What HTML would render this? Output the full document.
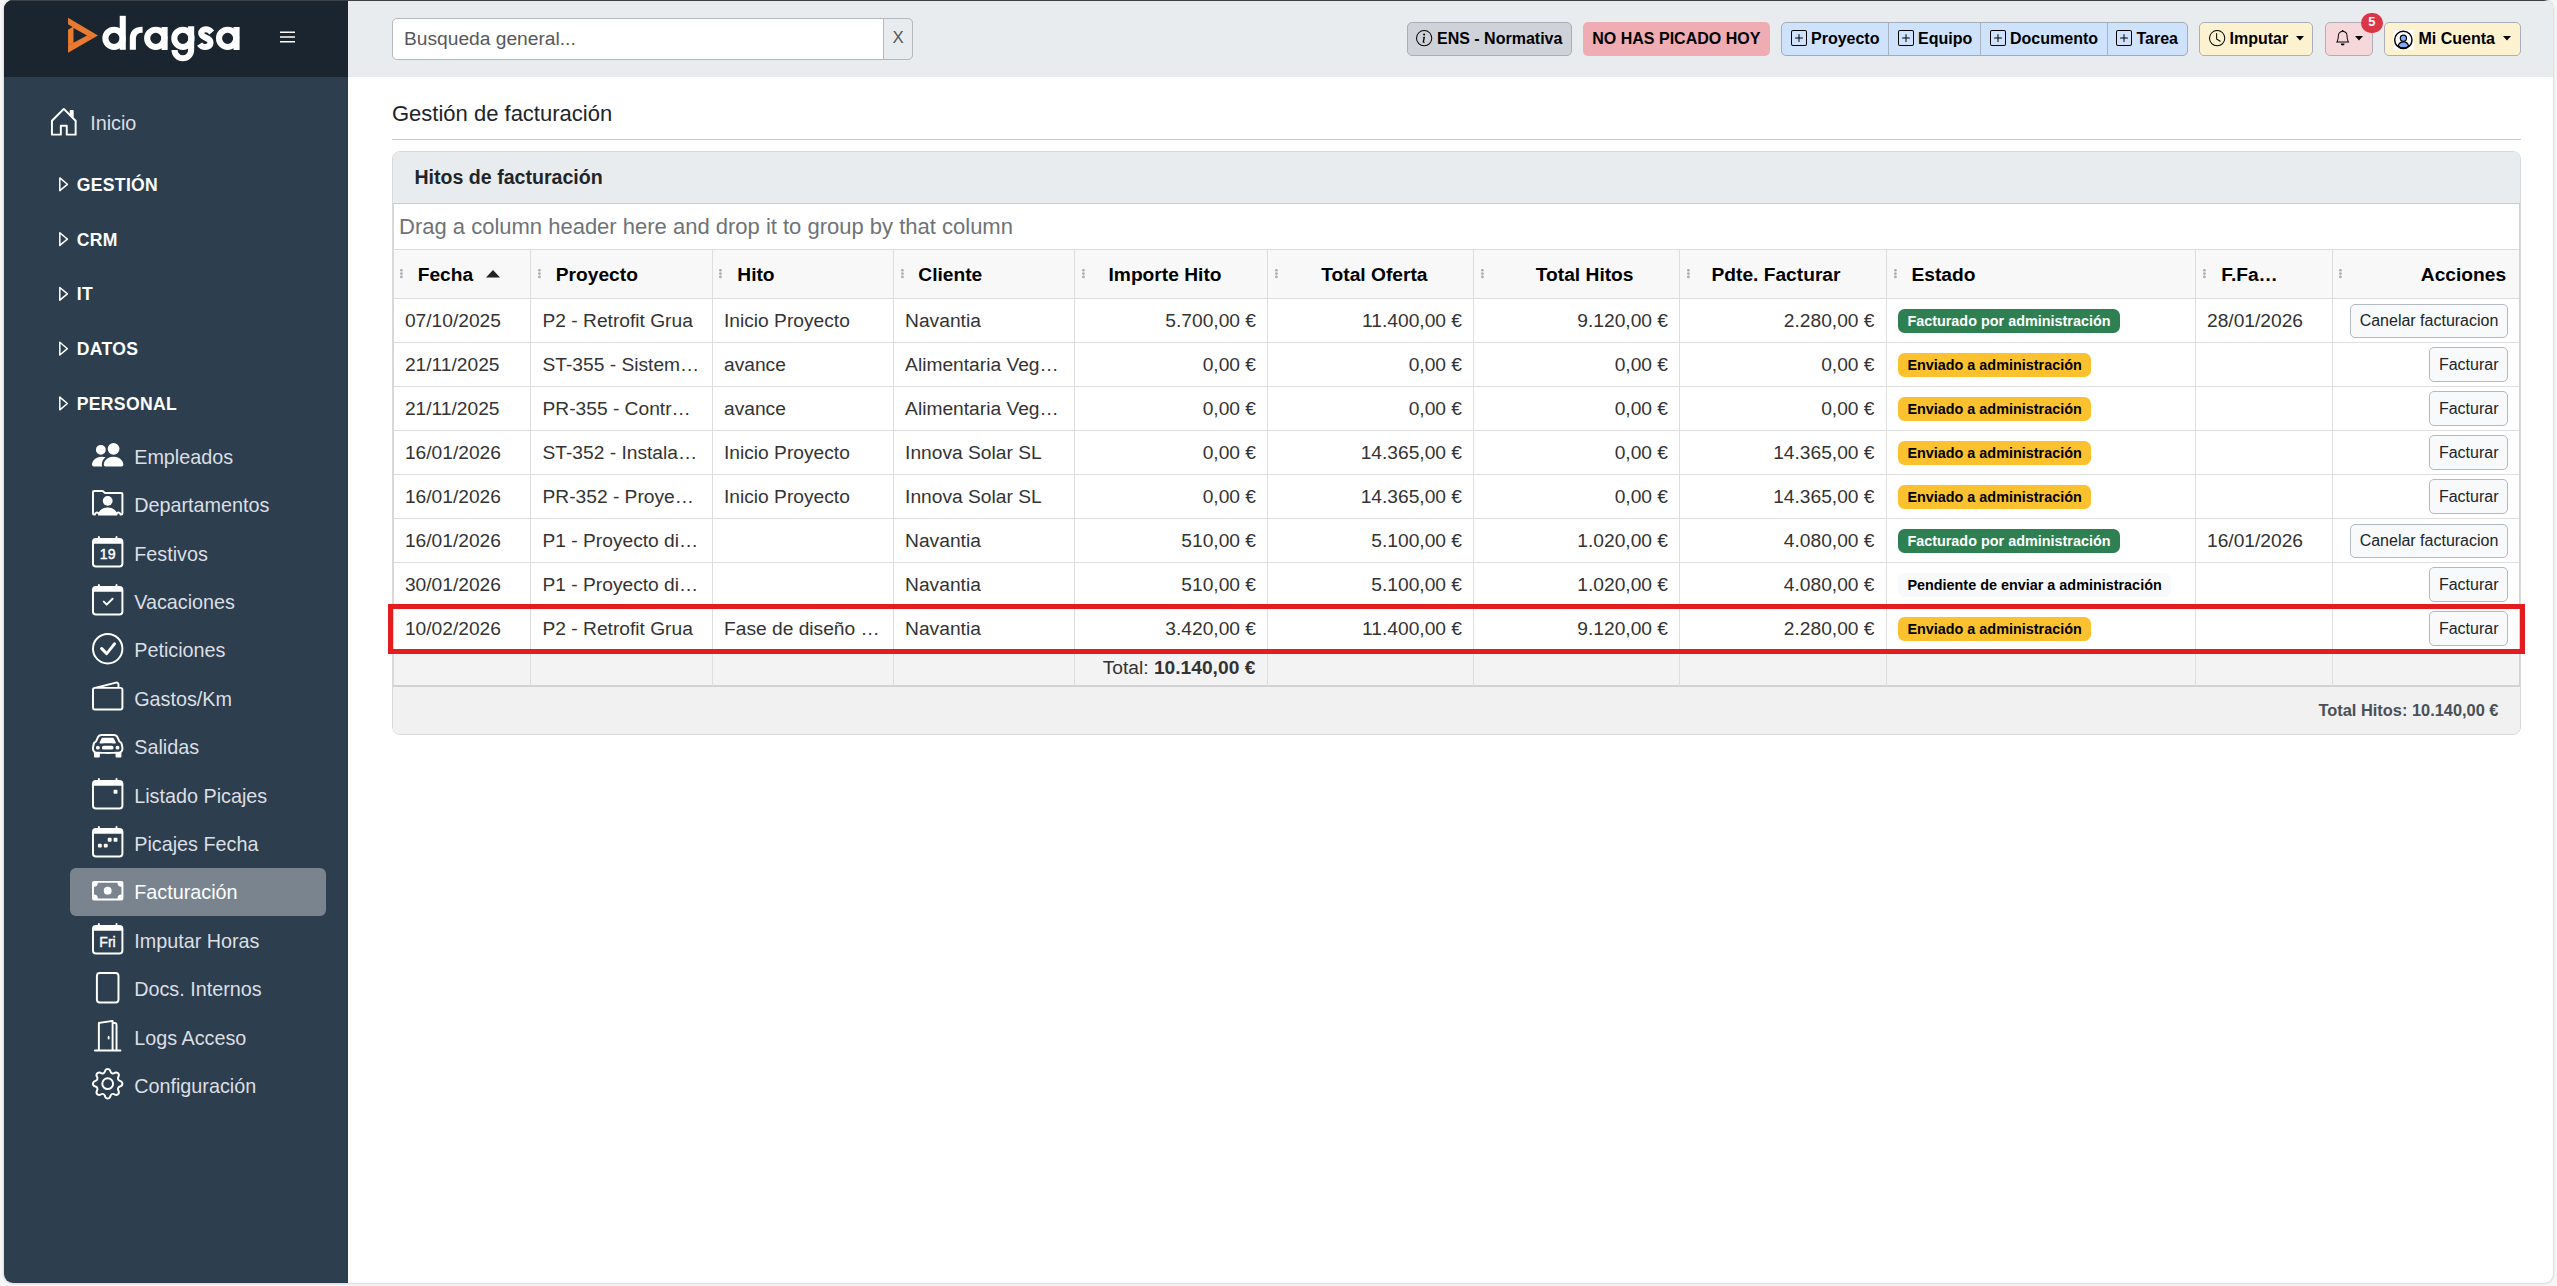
<!DOCTYPE html>
<html><head><meta charset="utf-8"><style>
*{box-sizing:border-box;margin:0;padding:0}
html,body{width:2557px;height:1286px;overflow:hidden;background:#f6f6f6;font-family:"Liberation Sans",sans-serif;color:#212529}
.a{position:absolute;white-space:nowrap;line-height:1}
.win{position:absolute;left:4px;top:0;width:2549px;height:1283px;border-radius:9px;overflow:hidden;background:#fff;box-shadow:0 0 2px 1px rgba(0,0,0,.12)}
svg{position:absolute;overflow:visible}
</style></head><body>
<div class="win">
<div class="a" style="left:0;top:0;width:344px;height:1283px;background:#2d3e4e"></div>
<div class="a" style="left:0;top:0;width:344px;height:77px;background:#1a2530"></div>
<div class="a" style="left:344px;top:0;width:2205px;height:77px;background:#e9ecef"></div>
<div class="a" style="left:0;top:0;width:2549px;height:1px;background:#3a4046"></div>
</div>
<svg style="left:0;top:0" width="2557" height="80">
<path fill="#e87b30" fill-rule="evenodd" d="M68.04 17.86 L97.97 35.45 L68.04 52.84 Z M73.5 27.97 L87.05 35.45 L73.5 42.73 Z M68.04 24.13 L72.6 26.9 L68.04 29.8 Z"/>
<path stroke="#d8662a" stroke-width="0.8" fill="none" d="M68.04 45.5 L73.5 42.73 M87.05 35.45 L92.3 38.3"/>
<g fill="none" stroke="#fff" stroke-width="6.1">
<circle cx="114" cy="38.35" r="8.6"/><path d="M122.75 15.8 V49.8"/>
<path d="M132.85 49.8 V38.5 Q132.85 29.7 142.6 29.7"/>
<circle cx="155.75" cy="38.35" r="8.6"/><path d="M164.6 27 V50"/>
<circle cx="182.9" cy="38.35" r="8.6"/><path d="M191.15 26.2 V50 A8.3 8.3 0 0 1 174.55 50"/>
<path d="M211.8 32.4 C209.8 30.1 207.6 29.3 205.7 29.3 C203 29.3 201.2 31 201.2 33.3 C201.2 35.6 203.2 36.6 205.6 37.6 C208.6 38.8 210.55 40.1 210.55 42.8 C210.55 45.6 208.4 46.95 205.5 46.95 C202.9 46.95 200.9 46 199.6 44.1"/>
<circle cx="227.6" cy="38.35" r="8.6"/><path d="M236.55 27 V50"/>
</g>
<g stroke="#fff" stroke-width="1.6"><path d="M280 32.2H295M280 37H295M280 41.8H295"/></g>
</svg>
<svg style="left:47.5px;top:105.7px" width="31.6" height="31.6" viewBox="0 0 16 16" fill="#fff"><path d="M8.354 1.146a.5.5 0 0 0-.708 0l-6 6A.5.5 0 0 0 1.5 7.5v7a.5.5 0 0 0 .5.5h4.5a.5.5 0 0 0 .5-.5v-4h2v4a.5.5 0 0 0 .5.5H14a.5.5 0 0 0 .5-.5v-7a.5.5 0 0 0-.146-.354L13 5.793V2.5a.5.5 0 0 0-.5-.5h-1a.5.5 0 0 0-.5.5v1.293zM2.5 14V7.707l5.5-5.5 5.5 5.5V14H10v-4a.5.5 0 0 0-.5-.5h-3a.5.5 0 0 0-.5.5v4z"/></svg>
<div class="a" style="left:90.2px;top:114.43px;font-size:19.8px;color:#dcdfe3">Inicio</div>
<div class="a" style="left:76.8px;top:176.89px;font-size:17.6px;color:#fff;font-weight:bold;letter-spacing:.3px">GESTIÓN</div>
<svg style="left:0;top:0" width="100" height="1286"><path d="M59.8 177.9 L67.4 184.3 L59.8 190.60000000000002 Z" fill="none" stroke="#fff" stroke-width="1.5" stroke-linejoin="round"/></svg>
<div class="a" style="left:76.8px;top:231.69px;font-size:17.6px;color:#fff;font-weight:bold;letter-spacing:.3px">CRM</div>
<svg style="left:0;top:0" width="100" height="1286"><path d="M59.8 232.70000000000002 L67.4 239.10000000000002 L59.8 245.40000000000003 Z" fill="none" stroke="#fff" stroke-width="1.5" stroke-linejoin="round"/></svg>
<div class="a" style="left:76.8px;top:286.49px;font-size:17.6px;color:#fff;font-weight:bold;letter-spacing:.3px">IT</div>
<svg style="left:0;top:0" width="100" height="1286"><path d="M59.8 287.5 L67.4 293.9 L59.8 300.2 Z" fill="none" stroke="#fff" stroke-width="1.5" stroke-linejoin="round"/></svg>
<div class="a" style="left:76.8px;top:341.29px;font-size:17.6px;color:#fff;font-weight:bold;letter-spacing:.3px">DATOS</div>
<svg style="left:0;top:0" width="100" height="1286"><path d="M59.8 342.3 L67.4 348.7 L59.8 355.0 Z" fill="none" stroke="#fff" stroke-width="1.5" stroke-linejoin="round"/></svg>
<div class="a" style="left:76.8px;top:396.09px;font-size:17.6px;color:#fff;font-weight:bold;letter-spacing:.3px">PERSONAL</div>
<svg style="left:0;top:0" width="100" height="1286"><path d="M59.8 397.1 L67.4 403.5 L59.8 409.8 Z" fill="none" stroke="#fff" stroke-width="1.5" stroke-linejoin="round"/></svg>
<div class="a" style="left:70px;top:868px;width:256px;height:47.5px;background:#79848f;border-radius:6px"></div>
<div class="a" style="left:134.2px;top:447.83px;font-size:19.8px;color:#dcdfe3">Empleados</div>
<div class="a" style="left:134.2px;top:496.23px;font-size:19.8px;color:#dcdfe3">Departamentos</div>
<div class="a" style="left:134.2px;top:544.63px;font-size:19.8px;color:#dcdfe3">Festivos</div>
<div class="a" style="left:134.2px;top:593.03px;font-size:19.8px;color:#dcdfe3">Vacaciones</div>
<div class="a" style="left:134.2px;top:641.43px;font-size:19.8px;color:#dcdfe3">Peticiones</div>
<div class="a" style="left:134.2px;top:689.83px;font-size:19.8px;color:#dcdfe3">Gastos/Km</div>
<div class="a" style="left:134.2px;top:738.23px;font-size:19.8px;color:#dcdfe3">Salidas</div>
<div class="a" style="left:134.2px;top:786.63px;font-size:19.8px;color:#dcdfe3">Listado Picajes</div>
<div class="a" style="left:134.2px;top:835.03px;font-size:19.8px;color:#dcdfe3">Picajes Fecha</div>
<div class="a" style="left:134.2px;top:883.43px;font-size:19.8px;color:#fff">Facturación</div>
<div class="a" style="left:134.2px;top:931.83px;font-size:19.8px;color:#dcdfe3">Imputar Horas</div>
<div class="a" style="left:134.2px;top:980.23px;font-size:19.8px;color:#dcdfe3">Docs. Internos</div>
<div class="a" style="left:134.2px;top:1028.63px;font-size:19.8px;color:#dcdfe3">Logs Acceso</div>
<div class="a" style="left:134.2px;top:1077.03px;font-size:19.8px;color:#dcdfe3">Configuración</div>
<svg style="left:92.2px;top:439.25px" width="31.4" height="31.4" viewBox="0 0 16 16" fill="#fff"><path d="M7 14s-1 0-1-1 1-4 5-4 5 3 5 4-1 1-1 1zm4-6a3 3 0 1 0 0-6 3 3 0 0 0 0 6m-5.784 6A2.24 2.24 0 0 1 5 13c0-1.355.68-2.75 1.936-3.72A6.3 6.3 0 0 0 5 9c-4 0-5 3-5 4s1 1 1 1zM4.5 8a2.5 2.5 0 1 0 0-5 2.5 2.5 0 0 0 0 5"/></svg>
<svg style="left:92.2px;top:487.65px" width="31.4" height="31.4" viewBox="0 0 16 16" fill="#fff"><path d="M8 9.05a2.5 2.5 0 1 0 0-5 2.5 2.5 0 0 0 0 5"/><path d="M1 1a1 1 0 0 0-1 1v11a1 1 0 0 0 1 1h.5a.5.5 0 0 0 .5-.5.5.5 0 0 1 1 0 .5.5 0 0 0 .5.5h9a.5.5 0 0 0 .5-.5.5.5 0 0 1 1 0 .5.5 0 0 0 .5.5h.5a1 1 0 0 0 1-1V3a1 1 0 0 0-1-1H6.707L6 1.293A1 1 0 0 0 5.293 1zm0 1h4.293L6 2.707A1 1 0 0 0 6.707 3H15v10h-.085a1.5 1.5 0 0 0-2.4-.63C11.885 11.223 10.554 10 8 10c-2.555 0-3.886 1.224-4.514 2.37a1.5 1.5 0 0 0-2.4.63H1z"/></svg>
<svg style="left:92.2px;top:536.05px" width="31.4" height="31.4" viewBox="0 0 16 16" fill="#fff"><text x="8" y="11.85" font-size="7.2" font-family="Liberation Sans" text-anchor="middle" stroke="#fff" stroke-width="0.22">19</text><path d="M3.5 0a.5.5 0 0 1 .5.5V1h8V.5a.5.5 0 0 1 1 0V1h1a2 2 0 0 1 2 2v11a2 2 0 0 1-2 2H2a2 2 0 0 1-2-2V3a2 2 0 0 1 2-2h1V.5a.5.5 0 0 1 .5-.5M1 4v10a1 1 0 0 0 1 1h12a1 1 0 0 0 1-1V4z"/></svg>
<svg style="left:92.2px;top:584.4499999999999px" width="31.4" height="31.4" viewBox="0 0 16 16" fill="#fff"><path d="M10.854 7.146a.5.5 0 0 1 0 .708l-3 3a.5.5 0 0 1-.708 0l-1.5-1.5a.5.5 0 1 1 .708-.708L7.5 9.793l2.646-2.647a.5.5 0 0 1 .708 0"/><path d="M3.5 0a.5.5 0 0 1 .5.5V1h8V.5a.5.5 0 0 1 1 0V1h1a2 2 0 0 1 2 2v11a2 2 0 0 1-2 2H2a2 2 0 0 1-2-2V3a2 2 0 0 1 2-2h1V.5a.5.5 0 0 1 .5-.5M1 4v10a1 1 0 0 0 1 1h12a1 1 0 0 0 1-1V4z"/></svg>
<svg style="left:92.2px;top:632.85px" width="31.4" height="31.4" viewBox="0 0 16 16" fill="#fff"><path d="M8 15A7 7 0 1 1 8 1a7 7 0 0 1 0 14m0 1A8 8 0 1 0 8 0a8 8 0 0 0 0 16"/><path d="m10.97 4.97-.02.022-3.473 4.425-2.093-2.094a.75.75 0 0 0-1.06 1.06L6.97 11.03a.75.75 0 0 0 1.079-.02l3.992-4.99a.75.75 0 0 0-1.071-1.05"/></svg>
<svg style="left:92.2px;top:681.25px" width="31.4" height="31.4" viewBox="0 0 16 16" fill="#fff"><path d="M12.136.326A1.5 1.5 0 0 1 14 1.78V3h.5A1.5 1.5 0 0 1 16 4.5v9a1.5 1.5 0 0 1-1.5 1.5h-13A1.5 1.5 0 0 1 0 13.5v-9a1.5 1.5 0 0 1 1.432-1.499zM5.562 3H13V1.78a.5.5 0 0 0-.621-.484zM1.5 4a.5.5 0 0 0-.5.5v9a.5.5 0 0 0 .5.5h13a.5.5 0 0 0 .5-.5v-9a.5.5 0 0 0-.5-.5z"/></svg>
<svg style="left:92.2px;top:729.65px" width="31.4" height="31.4" viewBox="0 0 16 16" fill="#fff"><path d="M4 9a1 1 0 1 1-2 0 1 1 0 0 1 2 0m10 0a1 1 0 1 1-2 0 1 1 0 0 1 2 0M6 8a1 1 0 0 0 0 2h4a1 1 0 1 0 0-2zM4.862 4.276 3.906 6.19a.51.51 0 0 0 .497.731c.91-.073 2.35-.17 3.597-.17s2.688.097 3.597.17a.51.51 0 0 0 .497-.731l-.956-1.913A.5.5 0 0 0 10.691 4H5.309a.5.5 0 0 0-.447.276"/><path d="M2.52 3.515A2.5 2.5 0 0 1 4.82 2h6.362c1 0 1.904.596 2.298 1.515l.792 1.848c.075.175.21.319.38.404.5.25.855.715.965 1.262l.335 1.679q.05.242.049.49v.413c0 .814-.39 1.543-1 1.997V13.5a.5.5 0 0 1-.5.5h-2a.5.5 0 0 1-.5-.5v-1.338c-1.292.048-2.745.088-4 .088s-2.708-.04-4-.088V13.5a.5.5 0 0 1-.5.5h-2a.5.5 0 0 1-.5-.5v-1.892c-.61-.454-1-1.183-1-1.997v-.413a2.5 2.5 0 0 1 .049-.49l.335-1.68c.11-.546.465-1.012.964-1.261a.8.8 0 0 0 .381-.404l.792-1.848ZM4.82 3a1.5 1.5 0 0 0-1.379.91l-.792 1.847a1.8 1.8 0 0 1-.853.904.8.8 0 0 0-.43.564L1.03 8.904a1.5 1.5 0 0 0-.03.294v.413c0 .796.62 1.448 1.408 1.484 1.555.07 3.786.155 5.592.155s4.037-.084 5.592-.155A1.48 1.48 0 0 0 15 9.611v-.413q0-.148-.03-.294l-.335-1.68a.8.8 0 0 0-.43-.563 1.8 1.8 0 0 1-.853-.904l-.792-1.848A1.5 1.5 0 0 0 11.18 3Z"/></svg>
<svg style="left:92.2px;top:778.0500000000001px" width="31.4" height="31.4" viewBox="0 0 16 16" fill="#fff"><path d="M11 6.5a.5.5 0 0 1 .5-.5h1a.5.5 0 0 1 .5.5v1a.5.5 0 0 1-.5.5h-1a.5.5 0 0 1-.5-.5z"/><path d="M3.5 0a.5.5 0 0 1 .5.5V1h8V.5a.5.5 0 0 1 1 0V1h1a2 2 0 0 1 2 2v11a2 2 0 0 1-2 2H2a2 2 0 0 1-2-2V3a2 2 0 0 1 2-2h1V.5a.5.5 0 0 1 .5-.5M1 4v10a1 1 0 0 0 1 1h12a1 1 0 0 0 1-1V4z"/></svg>
<svg style="left:92.2px;top:826.4499999999999px" width="31.4" height="31.4" viewBox="0 0 16 16" fill="#fff"><path d="M11 6.5a.5.5 0 0 1 .5-.5h1a.5.5 0 0 1 .5.5v1a.5.5 0 0 1-.5.5h-1a.5.5 0 0 1-.5-.5zm-3 0a.5.5 0 0 1 .5-.5h1a.5.5 0 0 1 .5.5v1a.5.5 0 0 1-.5.5h-1a.5.5 0 0 1-.5-.5zm-5 3a.5.5 0 0 1 .5-.5h1a.5.5 0 0 1 .5.5v1a.5.5 0 0 1-.5.5h-1a.5.5 0 0 1-.5-.5zm3 0a.5.5 0 0 1 .5-.5h1a.5.5 0 0 1 .5.5v1a.5.5 0 0 1-.5.5h-1a.5.5 0 0 1-.5-.5z"/><path d="M3.5 0a.5.5 0 0 1 .5.5V1h8V.5a.5.5 0 0 1 1 0V1h1a2 2 0 0 1 2 2v11a2 2 0 0 1-2 2H2a2 2 0 0 1-2-2V3a2 2 0 0 1 2-2h1V.5a.5.5 0 0 1 .5-.5M1 4v10a1 1 0 0 0 1 1h12a1 1 0 0 0 1-1V4z"/></svg>
<svg style="left:92.2px;top:874.85px" width="31.4" height="31.4" viewBox="0 0 16 16" fill="#fff"><path d="M8 10a2 2 0 1 0 0-4 2 2 0 0 0 0 4"/><path d="M0 4a1 1 0 0 1 1-1h14a1 1 0 0 1 1 1v8a1 1 0 0 1-1 1H1a1 1 0 0 1-1-1zm3 0a2 2 0 0 1-2 2v4a2 2 0 0 1 2 2h10a2 2 0 0 1 2-2V6a2 2 0 0 1-2-2z"/></svg>
<svg style="left:92.2px;top:923.25px" width="31.4" height="31.4" viewBox="0 0 16 16" fill="#fff"><text x="7.9" y="12" font-size="7.2" font-family="Liberation Sans" text-anchor="middle" stroke="#fff" stroke-width="0.2">Fri</text><path d="M3.5 0a.5.5 0 0 1 .5.5V1h8V.5a.5.5 0 0 1 1 0V1h1a2 2 0 0 1 2 2v11a2 2 0 0 1-2 2H2a2 2 0 0 1-2-2V3a2 2 0 0 1 2-2h1V.5a.5.5 0 0 1 .5-.5M1 4v10a1 1 0 0 0 1 1h12a1 1 0 0 0 1-1V4z"/></svg>
<svg style="left:92.2px;top:971.65px" width="31.4" height="31.4" viewBox="0 0 16 16" fill="#fff"><path d="M4 0a2 2 0 0 0-2 2v12a2 2 0 0 0 2 2h8a2 2 0 0 0 2-2V2a2 2 0 0 0-2-2zm0 1h8a1 1 0 0 1 1 1v12a1 1 0 0 1-1 1H4a1 1 0 0 1-1-1V2a1 1 0 0 1 1-1"/></svg>
<svg style="left:92.2px;top:1020.0500000000001px" width="31.4" height="31.4" viewBox="0 0 16 16" fill="#fff"><path d="M8.5 10c-.276 0-.5-.448-.5-1s.224-1 .5-1 .5.448.5 1-.224 1-.5 1"/><path d="M10.828.122A.5.5 0 0 1 11 .5V1h.5A1.5 1.5 0 0 1 13 2.5V15h1.5a.5.5 0 0 1 0 1h-13a.5.5 0 0 1 0-1H3V1.5a.5.5 0 0 1 .43-.495l7-1a.5.5 0 0 1 .398.117M11.5 2H11v13h1V2.5a.5.5 0 0 0-.5-.5M4 1.934V15h6V1.077z"/></svg>
<svg style="left:92.2px;top:1068.45px" width="31.4" height="31.4" viewBox="0 0 16 16" fill="#fff"><path d="M8 4.754a3.246 3.246 0 1 0 0 6.492 3.246 3.246 0 0 0 0-6.492M5.754 8a2.246 2.246 0 1 1 4.492 0 2.246 2.246 0 0 1-4.492 0"/><path d="M9.796 1.343c-.527-1.79-3.065-1.79-3.592 0l-.094.319a.873.873 0 0 1-1.255.52l-.292-.16c-1.64-.892-3.433.902-2.54 2.541l.159.292a.873.873 0 0 1-.52 1.255l-.319.094c-1.79.527-1.79 3.065 0 3.592l.319.094a.873.873 0 0 1 .52 1.255l-.16.292c-.892 1.64.901 3.434 2.541 2.54l.292-.159a.873.873 0 0 1 1.255.52l.094.319c.527 1.79 3.065 1.79 3.592 0l.094-.319a.873.873 0 0 1 1.255-.52l.292.16c1.64.893 3.434-.902 2.54-2.541l-.159-.292a.873.873 0 0 1 .52-1.255l.319-.094c1.79-.527 1.79-3.065 0-3.592l-.319-.094a.873.873 0 0 1-.52-1.255l.16-.292c.893-1.64-.902-3.433-2.541-2.54l-.292.159a.873.873 0 0 1-1.255-.52zm-2.633.283c.246-.835 1.428-.835 1.674 0l.094.319a1.873 1.873 0 0 0 2.693 1.115l.291-.16c.764-.415 1.6.42 1.184 1.185l-.159.292a1.873 1.873 0 0 0 1.116 2.692l.318.094c.835.246.835 1.428 0 1.674l-.319.094a1.873 1.873 0 0 0-1.115 2.693l.16.291c.415.764-.42 1.6-1.185 1.184l-.291-.159a1.873 1.873 0 0 0-2.693 1.116l-.094.318c-.246.835-1.428.835-1.674 0l-.094-.319a1.873 1.873 0 0 0-2.692-1.115l-.292.16c-.764.415-1.6-.42-1.184-1.185l.159-.291A1.873 1.873 0 0 0 1.945 8.93l-.319-.094c-.835-.246-.835-1.428 0-1.674l.319-.094A1.873 1.873 0 0 0 3.06 4.377l-.16-.292c-.415-.764.42-1.6 1.185-1.184l.292.159a1.873 1.873 0 0 0 2.692-1.115z"/></svg>
<div class="a" style="left:392px;top:18px;width:521px;height:42px;border:1.2px solid #b3b9bf;border-radius:5px;background:#fff"></div>
<div class="a" style="left:883px;top:18px;width:30px;height:42px;border:1.2px solid #b3b9bf;border-radius:0 5px 5px 0;background:#e9ecef"></div>
<div class="a" style="left:404px;top:28.54px;font-size:19.2px;color:#56595d">Busqueda general...</div>
<div class="a" style="left:892.6px;top:30.47px;font-size:16.8px;color:#555">X</div>
<div class="a" style="left:1407px;top:22px;width:165px;height:34px;background:#cfd3d9;border:1.2px solid #a9afb6;border-radius:5px"></div>
<svg style="left:1416.3px;top:29.6px" width="16.3" height="16.3" viewBox="0 0 16 16" fill="#000"><path d="M8 15A7 7 0 1 1 8 1a7 7 0 0 1 0 14m0 1A8 8 0 1 0 8 0a8 8 0 0 0 0 16"/><path d="m8.93 6.588-2.29.287-.082.38.45.083c.294.07.352.176.288.469l-.738 3.468c-.194.897.105 1.319.808 1.319.545 0 1.178-.252 1.465-.598l.088-.416c-.2.176-.492.246-.686.246-.275 0-.375-.193-.304-.533zM9 4.5a1 1 0 1 1-2 0 1 1 0 0 1 2 0"/></svg>
<div class="a" style="left:1437px;top:31.45px;font-size:16px;font-weight:bold;color:#000">ENS - Normativa</div>
<div class="a" style="left:1583px;top:22px;width:187px;height:34px;background:#efadb3;border-radius:5px"></div>
<div class="a" style="left:1592.3px;top:31.45px;font-size:16px;font-weight:bold;color:#000">NO HAS PICADO HOY</div>
<div class="a" style="left:1781px;top:22px;width:407px;height:34px;background:#cfe2fc;border:1.2px solid #a2acb8;border-radius:5px"></div>
<div class="a" style="left:1888.0px;top:23px;width:1.2px;height:32px;background:#a9b4c2"></div>
<div class="a" style="left:1979.6000000000001px;top:23px;width:1.2px;height:32px;background:#a9b4c2"></div>
<div class="a" style="left:2106.6px;top:23px;width:1.2px;height:32px;background:#a9b4c2"></div>
<svg style="left:1790.8px;top:29.8px" width="16" height="16" viewBox="0 0 16 16" fill="#000"><path d="M14 1a1 1 0 0 1 1 1v12a1 1 0 0 1-1 1H2a1 1 0 0 1-1-1V2a1 1 0 0 1 1-1zM2 0a2 2 0 0 0-2 2v12a2 2 0 0 0 2 2h12a2 2 0 0 0 2-2V2a2 2 0 0 0-2-2z"/><path d="M8 4a.5.5 0 0 1 .5.5v3h3a.5.5 0 0 1 0 1h-3v3a.5.5 0 0 1-1 0v-3h-3a.5.5 0 0 1 0-1h3v-3A.5.5 0 0 1 8 4"/></svg>
<div class="a" style="left:1811px;top:31.45px;font-size:16px;font-weight:bold;color:#000">Proyecto</div>
<svg style="left:1897.8px;top:29.8px" width="16" height="16" viewBox="0 0 16 16" fill="#000"><path d="M14 1a1 1 0 0 1 1 1v12a1 1 0 0 1-1 1H2a1 1 0 0 1-1-1V2a1 1 0 0 1 1-1zM2 0a2 2 0 0 0-2 2v12a2 2 0 0 0 2 2h12a2 2 0 0 0 2-2V2a2 2 0 0 0-2-2z"/><path d="M8 4a.5.5 0 0 1 .5.5v3h3a.5.5 0 0 1 0 1h-3v3a.5.5 0 0 1-1 0v-3h-3a.5.5 0 0 1 0-1h3v-3A.5.5 0 0 1 8 4"/></svg>
<div class="a" style="left:1918px;top:31.45px;font-size:16px;font-weight:bold;color:#000">Equipo</div>
<svg style="left:1989.8px;top:29.8px" width="16" height="16" viewBox="0 0 16 16" fill="#000"><path d="M14 1a1 1 0 0 1 1 1v12a1 1 0 0 1-1 1H2a1 1 0 0 1-1-1V2a1 1 0 0 1 1-1zM2 0a2 2 0 0 0-2 2v12a2 2 0 0 0 2 2h12a2 2 0 0 0 2-2V2a2 2 0 0 0-2-2z"/><path d="M8 4a.5.5 0 0 1 .5.5v3h3a.5.5 0 0 1 0 1h-3v3a.5.5 0 0 1-1 0v-3h-3a.5.5 0 0 1 0-1h3v-3A.5.5 0 0 1 8 4"/></svg>
<div class="a" style="left:2010px;top:31.45px;font-size:16px;font-weight:bold;color:#000">Documento</div>
<svg style="left:2116.3px;top:29.8px" width="16" height="16" viewBox="0 0 16 16" fill="#000"><path d="M14 1a1 1 0 0 1 1 1v12a1 1 0 0 1-1 1H2a1 1 0 0 1-1-1V2a1 1 0 0 1 1-1zM2 0a2 2 0 0 0-2 2v12a2 2 0 0 0 2 2h12a2 2 0 0 0 2-2V2a2 2 0 0 0-2-2z"/><path d="M8 4a.5.5 0 0 1 .5.5v3h3a.5.5 0 0 1 0 1h-3v3a.5.5 0 0 1-1 0v-3h-3a.5.5 0 0 1 0-1h3v-3A.5.5 0 0 1 8 4"/></svg>
<div class="a" style="left:2136.5px;top:31.45px;font-size:16px;font-weight:bold;color:#000">Tarea</div>
<div class="a" style="left:2199px;top:22px;width:114px;height:34px;background:#fdf2d0;border:1.2px solid #a9b0ba;border-radius:5px"></div>
<svg style="left:2208.6px;top:29.6px" width="16.3" height="16.3" viewBox="0 0 16 16" fill="#000"><path d="M8 3.5a.5.5 0 0 0-1 0V9a.5.5 0 0 0 .252.434l3.5 2a.5.5 0 0 0 .496-.868L8 8.71z"/><path d="M8 16A8 8 0 1 0 8 0a8 8 0 0 0 0 16m7-8A7 7 0 1 1 1 8a7 7 0 0 1 14 0"/></svg>
<div class="a" style="left:2229.5px;top:31.45px;font-size:16px;font-weight:bold;color:#000">Imputar</div>
<svg style="left:2295.5px;top:35.8px" width="9" height="6"><path d="M0 0 H8 L4 4.5 Z" fill="#000"/></svg>
<div class="a" style="left:2325px;top:22px;width:48px;height:34px;background:#f6d8db;border:1.2px solid #b1adb5;border-radius:5px"></div>
<svg style="left:2335.4px;top:29.6px" width="15.4" height="15.4" viewBox="0 0 16 16" fill="#000"><path d="M8 16a2 2 0 0 0 2-2H6a2 2 0 0 0 2 2M8 1.918l-.797.161A4 4 0 0 0 4 6c0 .628-.134 2.197-.459 3.742-.16.767-.376 1.566-.663 2.258h10.244c-.287-.692-.502-1.49-.663-2.258C12.134 8.197 12 6.628 12 6a4 4 0 0 0-3.203-3.92zM14.22 12c.223.447.481.801.78 1H1c.299-.199.557-.553.78-1C2.68 10.2 3 6.88 3 6c0-2.42 1.72-4.44 4.005-4.901a1 1 0 1 1 1.99 0A5 5 0 0 1 13 6c0 .88.32 4.2 1.22 6"/></svg>
<svg style="left:2354.8px;top:35.8px" width="9" height="6"><path d="M0 0 H8 L4 4.5 Z" fill="#000"/></svg>
<div class="a" style="left:2360.8px;top:12.9px;width:22.1px;height:19.8px;border-radius:10px;background:#dc3545;color:#fff;font-weight:bold;font-size:12.8px;line-height:18.4px;text-align:center">5</div>
<div class="a" style="left:2384.4px;top:22px;width:136.6px;height:34px;background:#fdf2d0;border:1.2px solid #a9b0ba;border-radius:5px"></div>
<svg style="left:2393.1px;top:30px" width="21" height="20" viewBox="0 0 21 20"><rect x="0" y="0" width="20.8" height="20" fill="#fff"/><path d="M5.2 15.8 Q6.3 11.8 10.4 11.8 Q14.5 11.8 15.6 15.8 Q13.5 17.9 10.4 17.9 Q7.3 17.9 5.2 15.8 Z" fill="#82a9f8" stroke="#000" stroke-width="1.2"/><circle cx="10.4" cy="8.3" r="3.1" fill="#82a9f8" stroke="#000" stroke-width="1.2"/><circle cx="10.35" cy="9.9" r="8.65" fill="none" stroke="#000" stroke-width="1.45"/></svg>
<div class="a" style="left:2418.5px;top:31.45px;font-size:16px;font-weight:bold;color:#000">Mi Cuenta</div>
<svg style="left:2502.5px;top:35.8px" width="9" height="6"><path d="M0 0 H8 L4 4.5 Z" fill="#000"/></svg>
<div class="a" style="left:392px;top:102.87px;font-size:22px;color:#212529">Gestión de facturación</div>
<div class="a" style="left:392px;top:139px;width:2129px;height:1.2px;background:#c9cbcd"></div>
<div class="a" style="left:392px;top:151px;width:2129px;height:584px;border:1.3px solid #d6d8da;border-radius:8px;background:#fff;overflow:hidden"></div>
<div class="a" style="left:393px;top:152px;width:2127px;height:51.5px;background:#e9ecef;border-radius:7px 7px 0 0"></div>
<div class="a" style="left:393px;top:202.6px;width:2127px;height:1.7px;background:#cacccf"></div>
<div class="a" style="left:414.4px;top:167.50px;font-size:19.6px;font-weight:bold;color:#212529">Hitos de facturación</div>
<div class="a" style="left:399px;top:215.97px;font-size:22px;color:#6e7378">Drag a column header here and drop it to group by that column</div>
<div class="a" style="left:394px;top:249.3px;width:2126px;height:49px;background:#f8f8f8"></div>
<div class="a" style="left:394px;top:249px;width:2126px;height:1.2px;background:#dcdcdc"></div>
<div class="a" style="left:394px;top:650.5px;width:2126px;height:35.5px;background:#f3f3f3"></div>
<div class="a" style="left:393px;top:686px;width:2127px;height:48px;background:#f1f1f1;border-radius:0 0 7px 7px"></div>
<div class="a" style="left:393px;top:685.2px;width:2127px;height:1.6px;background:#d2d2d2"></div>
<div class="a" style="left:394px;top:297.9px;width:2126px;height:1.2px;background:#dedede"></div>
<div class="a" style="left:394px;top:341.9px;width:2126px;height:1.2px;background:#dedede"></div>
<div class="a" style="left:394px;top:385.9px;width:2126px;height:1.2px;background:#dedede"></div>
<div class="a" style="left:394px;top:429.9px;width:2126px;height:1.2px;background:#dedede"></div>
<div class="a" style="left:394px;top:473.9px;width:2126px;height:1.2px;background:#dedede"></div>
<div class="a" style="left:394px;top:517.9px;width:2126px;height:1.2px;background:#dedede"></div>
<div class="a" style="left:394px;top:561.9px;width:2126px;height:1.2px;background:#dedede"></div>
<div class="a" style="left:394px;top:605.9px;width:2126px;height:1.2px;background:#dedede"></div>
<div class="a" style="left:394px;top:649.9px;width:2126px;height:1.2px;background:#dedede"></div>
<div class="a" style="left:529.9px;top:249.5px;width:1.2px;height:436px;background:#dedede"></div>
<div class="a" style="left:711.6px;top:249.5px;width:1.2px;height:436px;background:#dedede"></div>
<div class="a" style="left:892.9px;top:249.5px;width:1.2px;height:436px;background:#dedede"></div>
<div class="a" style="left:1073.8000000000002px;top:249.5px;width:1.2px;height:436px;background:#dedede"></div>
<div class="a" style="left:1266.7px;top:249.5px;width:1.2px;height:436px;background:#dedede"></div>
<div class="a" style="left:1473.0px;top:249.5px;width:1.2px;height:436px;background:#dedede"></div>
<div class="a" style="left:1678.9px;top:249.5px;width:1.2px;height:436px;background:#dedede"></div>
<div class="a" style="left:1885.8000000000002px;top:249.5px;width:1.2px;height:436px;background:#dedede"></div>
<div class="a" style="left:2194.9px;top:249.5px;width:1.2px;height:436px;background:#dedede"></div>
<div class="a" style="left:2331.6px;top:249.5px;width:1.2px;height:436px;background:#dedede"></div>
<div class="a" style="left:393px;top:204px;width:1.2px;height:482px;background:#d9d9d9"></div>
<div class="a" style="left:2518.7000000000003px;top:204px;width:1.2px;height:482px;background:#d2d2d2"></div>
<div class="a" style="left:417.7px;top:264.64px;font-size:19.2px;font-weight:bold;color:#000">Fecha</div>
<div class="a" style="left:555.8px;top:264.64px;font-size:19.2px;font-weight:bold;color:#000">Proyecto</div>
<div class="a" style="left:737.3px;top:264.64px;font-size:19.2px;font-weight:bold;color:#000">Hito</div>
<div class="a" style="left:918.3px;top:264.64px;font-size:19.2px;font-weight:bold;color:#000">Cliente</div>
<div class="a" style="right:1335.5px;top:264.64px;font-size:19.2px;text-align:right;font-weight:bold;color:#000">Importe Hito</div>
<div class="a" style="right:1129.5px;top:264.64px;font-size:19.2px;text-align:right;font-weight:bold;color:#000">Total Oferta</div>
<div class="a" style="right:923.5px;top:264.64px;font-size:19.2px;text-align:right;font-weight:bold;color:#000">Total Hitos</div>
<div class="a" style="right:716.5px;top:264.64px;font-size:19.2px;text-align:right;font-weight:bold;color:#000">Pdte. Facturar</div>
<div class="a" style="left:1911.5px;top:264.64px;font-size:19.2px;font-weight:bold;color:#000">Estado</div>
<div class="a" style="left:2221.3px;top:264.64px;font-size:19.2px;font-weight:bold;color:#000">F.Fa…</div>
<div class="a" style="right:50.90000000000009px;top:264.64px;font-size:19.2px;text-align:right;font-weight:bold;color:#000">Acciones</div>
<svg style="left:400.2px;top:268.6px" width="4" height="10"><g fill="#a8b0b8"><rect x="0" y="0" width="2.8" height="2.6" rx="1.3"/><rect x="0" y="3.3" width="2.8" height="2.6" rx="1.3"/><rect x="0" y="6.6" width="2.8" height="2.6" rx="1.3"/></g></svg>
<svg style="left:537.7px;top:268.6px" width="4" height="10"><g fill="#a8b0b8"><rect x="0" y="0" width="2.8" height="2.6" rx="1.3"/><rect x="0" y="3.3" width="2.8" height="2.6" rx="1.3"/><rect x="0" y="6.6" width="2.8" height="2.6" rx="1.3"/></g></svg>
<svg style="left:719.4000000000001px;top:268.6px" width="4" height="10"><g fill="#a8b0b8"><rect x="0" y="0" width="2.8" height="2.6" rx="1.3"/><rect x="0" y="3.3" width="2.8" height="2.6" rx="1.3"/><rect x="0" y="6.6" width="2.8" height="2.6" rx="1.3"/></g></svg>
<svg style="left:900.7px;top:268.6px" width="4" height="10"><g fill="#a8b0b8"><rect x="0" y="0" width="2.8" height="2.6" rx="1.3"/><rect x="0" y="3.3" width="2.8" height="2.6" rx="1.3"/><rect x="0" y="6.6" width="2.8" height="2.6" rx="1.3"/></g></svg>
<svg style="left:1081.6000000000001px;top:268.6px" width="4" height="10"><g fill="#a8b0b8"><rect x="0" y="0" width="2.8" height="2.6" rx="1.3"/><rect x="0" y="3.3" width="2.8" height="2.6" rx="1.3"/><rect x="0" y="6.6" width="2.8" height="2.6" rx="1.3"/></g></svg>
<svg style="left:1274.5px;top:268.6px" width="4" height="10"><g fill="#a8b0b8"><rect x="0" y="0" width="2.8" height="2.6" rx="1.3"/><rect x="0" y="3.3" width="2.8" height="2.6" rx="1.3"/><rect x="0" y="6.6" width="2.8" height="2.6" rx="1.3"/></g></svg>
<svg style="left:1480.8px;top:268.6px" width="4" height="10"><g fill="#a8b0b8"><rect x="0" y="0" width="2.8" height="2.6" rx="1.3"/><rect x="0" y="3.3" width="2.8" height="2.6" rx="1.3"/><rect x="0" y="6.6" width="2.8" height="2.6" rx="1.3"/></g></svg>
<svg style="left:1686.7px;top:268.6px" width="4" height="10"><g fill="#a8b0b8"><rect x="0" y="0" width="2.8" height="2.6" rx="1.3"/><rect x="0" y="3.3" width="2.8" height="2.6" rx="1.3"/><rect x="0" y="6.6" width="2.8" height="2.6" rx="1.3"/></g></svg>
<svg style="left:1893.6000000000001px;top:268.6px" width="4" height="10"><g fill="#a8b0b8"><rect x="0" y="0" width="2.8" height="2.6" rx="1.3"/><rect x="0" y="3.3" width="2.8" height="2.6" rx="1.3"/><rect x="0" y="6.6" width="2.8" height="2.6" rx="1.3"/></g></svg>
<svg style="left:2202.7px;top:268.6px" width="4" height="10"><g fill="#a8b0b8"><rect x="0" y="0" width="2.8" height="2.6" rx="1.3"/><rect x="0" y="3.3" width="2.8" height="2.6" rx="1.3"/><rect x="0" y="6.6" width="2.8" height="2.6" rx="1.3"/></g></svg>
<svg style="left:2339.3999999999996px;top:268.6px" width="4" height="10"><g fill="#a8b0b8"><rect x="0" y="0" width="2.8" height="2.6" rx="1.3"/><rect x="0" y="3.3" width="2.8" height="2.6" rx="1.3"/><rect x="0" y="6.6" width="2.8" height="2.6" rx="1.3"/></g></svg>
<svg style="left:486px;top:269.8px" width="15" height="8"><path d="M7 0 L14 7.4 H0 Z" fill="#222"/></svg>
<div class="a" style="left:404.9px;top:310.64px;font-size:19.2px;color:#333">07/10/2025</div>
<div class="a" style="left:542.5px;top:310.64px;font-size:19.2px;color:#333">P2 - Retrofit Grua</div>
<div class="a" style="left:724px;top:310.64px;font-size:19.2px;color:#333">Inicio Proyecto</div>
<div class="a" style="left:905.1px;top:310.64px;font-size:19.2px;color:#333">Navantia</div>
<div class="a" style="right:1301px;top:310.64px;font-size:19.2px;text-align:right;color:#333">5.700,00 €</div>
<div class="a" style="right:1095px;top:310.64px;font-size:19.2px;text-align:right;color:#333">11.400,00 €</div>
<div class="a" style="right:889px;top:310.64px;font-size:19.2px;text-align:right;color:#333">9.120,00 €</div>
<div class="a" style="right:682.5px;top:310.64px;font-size:19.2px;text-align:right;color:#333">2.280,00 €</div>
<div class="a" style="left:1898px;top:309.0px;height:23.8px;padding:0 9.4px;border-radius:6.5px;background:#2e8052;color:#fff;font-weight:bold;font-size:14.4px;line-height:25.2px">Facturado por administración</div>
<div class="a" style="left:2207px;top:310.64px;font-size:19.2px;color:#333">28/01/2026</div>
<div class="a" style="left:2350px;top:304.3px;width:158px;height:33.4px;border:1.2px solid #b3b9c0;border-radius:5px;background:#f8f9fa;color:#212529;font-size:16px;line-height:31px;text-align:center">Canelar facturacion</div>
<div class="a" style="left:404.9px;top:354.64px;font-size:19.2px;color:#333">21/11/2025</div>
<div class="a" style="left:542.5px;top:354.64px;font-size:19.2px;color:#333">ST-355 - Sistem…</div>
<div class="a" style="left:724px;top:354.64px;font-size:19.2px;color:#333">avance</div>
<div class="a" style="left:905.1px;top:354.64px;font-size:19.2px;color:#333">Alimentaria Veg…</div>
<div class="a" style="right:1301px;top:354.64px;font-size:19.2px;text-align:right;color:#333">0,00 €</div>
<div class="a" style="right:1095px;top:354.64px;font-size:19.2px;text-align:right;color:#333">0,00 €</div>
<div class="a" style="right:889px;top:354.64px;font-size:19.2px;text-align:right;color:#333">0,00 €</div>
<div class="a" style="right:682.5px;top:354.64px;font-size:19.2px;text-align:right;color:#333">0,00 €</div>
<div class="a" style="left:1898px;top:353.0px;height:23.8px;padding:0 9.4px;border-radius:6.5px;background:#fcc12e;color:#000;font-weight:bold;font-size:14.4px;line-height:25.2px">Enviado a administración</div>
<div class="a" style="left:2429.4px;top:347.3px;width:78.6px;height:34.6px;border:1.2px solid #b3b9c0;border-radius:5px;background:#f8f9fa;color:#212529;font-size:16px;line-height:34.2px;text-align:center">Facturar</div>
<div class="a" style="left:404.9px;top:398.64px;font-size:19.2px;color:#333">21/11/2025</div>
<div class="a" style="left:542.5px;top:398.64px;font-size:19.2px;color:#333">PR-355 - Contr…</div>
<div class="a" style="left:724px;top:398.64px;font-size:19.2px;color:#333">avance</div>
<div class="a" style="left:905.1px;top:398.64px;font-size:19.2px;color:#333">Alimentaria Veg…</div>
<div class="a" style="right:1301px;top:398.64px;font-size:19.2px;text-align:right;color:#333">0,00 €</div>
<div class="a" style="right:1095px;top:398.64px;font-size:19.2px;text-align:right;color:#333">0,00 €</div>
<div class="a" style="right:889px;top:398.64px;font-size:19.2px;text-align:right;color:#333">0,00 €</div>
<div class="a" style="right:682.5px;top:398.64px;font-size:19.2px;text-align:right;color:#333">0,00 €</div>
<div class="a" style="left:1898px;top:397.0px;height:23.8px;padding:0 9.4px;border-radius:6.5px;background:#fcc12e;color:#000;font-weight:bold;font-size:14.4px;line-height:25.2px">Enviado a administración</div>
<div class="a" style="left:2429.4px;top:391.3px;width:78.6px;height:34.6px;border:1.2px solid #b3b9c0;border-radius:5px;background:#f8f9fa;color:#212529;font-size:16px;line-height:34.2px;text-align:center">Facturar</div>
<div class="a" style="left:404.9px;top:442.64px;font-size:19.2px;color:#333">16/01/2026</div>
<div class="a" style="left:542.5px;top:442.64px;font-size:19.2px;color:#333">ST-352 - Instala…</div>
<div class="a" style="left:724px;top:442.64px;font-size:19.2px;color:#333">Inicio Proyecto</div>
<div class="a" style="left:905.1px;top:442.64px;font-size:19.2px;color:#333">Innova Solar SL</div>
<div class="a" style="right:1301px;top:442.64px;font-size:19.2px;text-align:right;color:#333">0,00 €</div>
<div class="a" style="right:1095px;top:442.64px;font-size:19.2px;text-align:right;color:#333">14.365,00 €</div>
<div class="a" style="right:889px;top:442.64px;font-size:19.2px;text-align:right;color:#333">0,00 €</div>
<div class="a" style="right:682.5px;top:442.64px;font-size:19.2px;text-align:right;color:#333">14.365,00 €</div>
<div class="a" style="left:1898px;top:441.0px;height:23.8px;padding:0 9.4px;border-radius:6.5px;background:#fcc12e;color:#000;font-weight:bold;font-size:14.4px;line-height:25.2px">Enviado a administración</div>
<div class="a" style="left:2429.4px;top:435.3px;width:78.6px;height:34.6px;border:1.2px solid #b3b9c0;border-radius:5px;background:#f8f9fa;color:#212529;font-size:16px;line-height:34.2px;text-align:center">Facturar</div>
<div class="a" style="left:404.9px;top:486.64px;font-size:19.2px;color:#333">16/01/2026</div>
<div class="a" style="left:542.5px;top:486.64px;font-size:19.2px;color:#333">PR-352 - Proye…</div>
<div class="a" style="left:724px;top:486.64px;font-size:19.2px;color:#333">Inicio Proyecto</div>
<div class="a" style="left:905.1px;top:486.64px;font-size:19.2px;color:#333">Innova Solar SL</div>
<div class="a" style="right:1301px;top:486.64px;font-size:19.2px;text-align:right;color:#333">0,00 €</div>
<div class="a" style="right:1095px;top:486.64px;font-size:19.2px;text-align:right;color:#333">14.365,00 €</div>
<div class="a" style="right:889px;top:486.64px;font-size:19.2px;text-align:right;color:#333">0,00 €</div>
<div class="a" style="right:682.5px;top:486.64px;font-size:19.2px;text-align:right;color:#333">14.365,00 €</div>
<div class="a" style="left:1898px;top:485.0px;height:23.8px;padding:0 9.4px;border-radius:6.5px;background:#fcc12e;color:#000;font-weight:bold;font-size:14.4px;line-height:25.2px">Enviado a administración</div>
<div class="a" style="left:2429.4px;top:479.3px;width:78.6px;height:34.6px;border:1.2px solid #b3b9c0;border-radius:5px;background:#f8f9fa;color:#212529;font-size:16px;line-height:34.2px;text-align:center">Facturar</div>
<div class="a" style="left:404.9px;top:530.64px;font-size:19.2px;color:#333">16/01/2026</div>
<div class="a" style="left:542.5px;top:530.64px;font-size:19.2px;color:#333">P1 - Proyecto di…</div>
<div class="a" style="left:724px;top:530.64px;font-size:19.2px;color:#333"></div>
<div class="a" style="left:905.1px;top:530.64px;font-size:19.2px;color:#333">Navantia</div>
<div class="a" style="right:1301px;top:530.64px;font-size:19.2px;text-align:right;color:#333">510,00 €</div>
<div class="a" style="right:1095px;top:530.64px;font-size:19.2px;text-align:right;color:#333">5.100,00 €</div>
<div class="a" style="right:889px;top:530.64px;font-size:19.2px;text-align:right;color:#333">1.020,00 €</div>
<div class="a" style="right:682.5px;top:530.64px;font-size:19.2px;text-align:right;color:#333">4.080,00 €</div>
<div class="a" style="left:1898px;top:529.0px;height:23.8px;padding:0 9.4px;border-radius:6.5px;background:#2e8052;color:#fff;font-weight:bold;font-size:14.4px;line-height:25.2px">Facturado por administración</div>
<div class="a" style="left:2207px;top:530.64px;font-size:19.2px;color:#333">16/01/2026</div>
<div class="a" style="left:2350px;top:524.3px;width:158px;height:33.4px;border:1.2px solid #b3b9c0;border-radius:5px;background:#f8f9fa;color:#212529;font-size:16px;line-height:31px;text-align:center">Canelar facturacion</div>
<div class="a" style="left:404.9px;top:574.64px;font-size:19.2px;color:#333">30/01/2026</div>
<div class="a" style="left:542.5px;top:574.64px;font-size:19.2px;color:#333">P1 - Proyecto di…</div>
<div class="a" style="left:724px;top:574.64px;font-size:19.2px;color:#333"></div>
<div class="a" style="left:905.1px;top:574.64px;font-size:19.2px;color:#333">Navantia</div>
<div class="a" style="right:1301px;top:574.64px;font-size:19.2px;text-align:right;color:#333">510,00 €</div>
<div class="a" style="right:1095px;top:574.64px;font-size:19.2px;text-align:right;color:#333">5.100,00 €</div>
<div class="a" style="right:889px;top:574.64px;font-size:19.2px;text-align:right;color:#333">1.020,00 €</div>
<div class="a" style="right:682.5px;top:574.64px;font-size:19.2px;text-align:right;color:#333">4.080,00 €</div>
<div class="a" style="left:1898px;top:573.0px;height:23.8px;padding:0 9.4px;border-radius:6.5px;background:#f8f9fa;color:#000;font-weight:bold;font-size:14.4px;line-height:25.2px">Pendiente de enviar a administración</div>
<div class="a" style="left:2429.4px;top:567.3px;width:78.6px;height:34.6px;border:1.2px solid #b3b9c0;border-radius:5px;background:#f8f9fa;color:#212529;font-size:16px;line-height:34.2px;text-align:center">Facturar</div>
<div class="a" style="left:404.9px;top:618.64px;font-size:19.2px;color:#333">10/02/2026</div>
<div class="a" style="left:542.5px;top:618.64px;font-size:19.2px;color:#333">P2 - Retrofit Grua</div>
<div class="a" style="left:724px;top:618.64px;font-size:19.2px;color:#333">Fase de diseño …</div>
<div class="a" style="left:905.1px;top:618.64px;font-size:19.2px;color:#333">Navantia</div>
<div class="a" style="right:1301px;top:618.64px;font-size:19.2px;text-align:right;color:#333">3.420,00 €</div>
<div class="a" style="right:1095px;top:618.64px;font-size:19.2px;text-align:right;color:#333">11.400,00 €</div>
<div class="a" style="right:889px;top:618.64px;font-size:19.2px;text-align:right;color:#333">9.120,00 €</div>
<div class="a" style="right:682.5px;top:618.64px;font-size:19.2px;text-align:right;color:#333">2.280,00 €</div>
<div class="a" style="left:1898px;top:617.0px;height:23.8px;padding:0 9.4px;border-radius:6.5px;background:#fcc12e;color:#000;font-weight:bold;font-size:14.4px;line-height:25.2px">Enviado a administración</div>
<div class="a" style="left:2429.4px;top:611.3px;width:78.6px;height:34.6px;border:1.2px solid #b3b9c0;border-radius:5px;background:#f8f9fa;color:#212529;font-size:16px;line-height:34.2px;text-align:center">Facturar</div>
<div class="a" style="right:1301.7px;top:658.44px;font-size:19.2px;text-align:right;color:#333">Total: <b>10.140,00 €</b></div>
<div class="a" style="right:58.5px;top:701.91px;font-size:16.4px;text-align:right;font-weight:bold;color:#495057">Total Hitos: 10.140,00 €</div>
<div class="a" style="left:388px;top:604px;width:2137px;height:50px;border:5px solid #e31c1f"></div>
</body></html>
